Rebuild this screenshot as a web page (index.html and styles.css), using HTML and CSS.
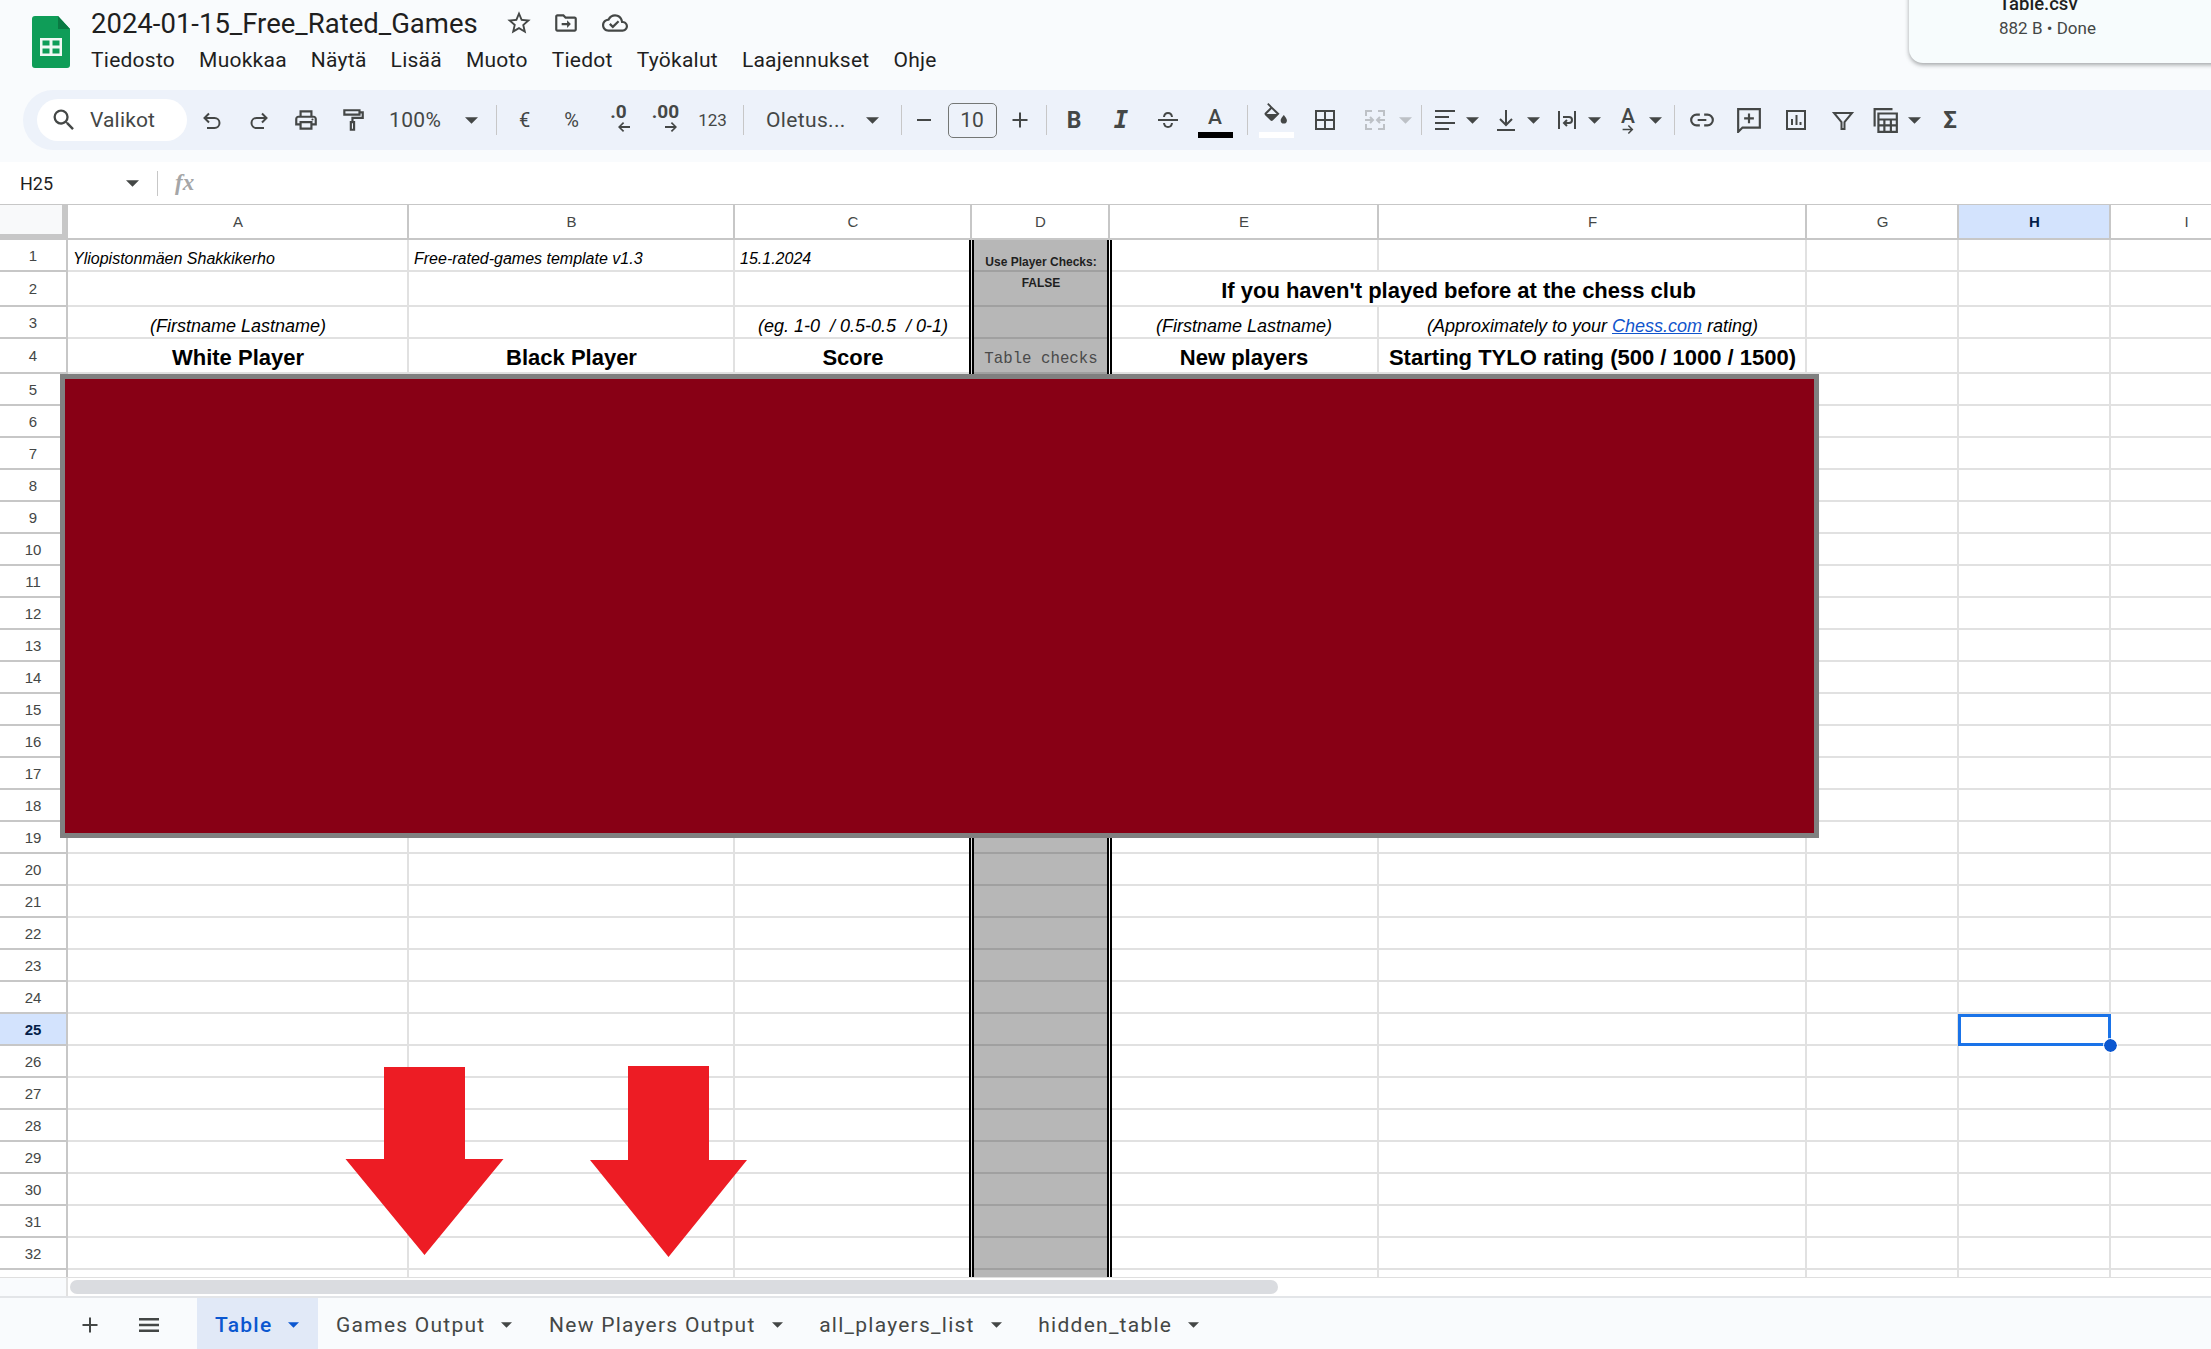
FILE: index.html
```html
<!DOCTYPE html>
<html lang="fi">
<head>
<meta charset="utf-8">
<title>2024-01-15_Free_Rated_Games</title>
<link rel="stylesheet" href="styles.css">
</head>
<body>
<svg class="sprite" xmlns="http://www.w3.org/2000/svg">
  <symbol id="i-search" viewBox="0 0 24 24"><path d="M15.5 14h-.79l-.28-.27A6.471 6.471 0 0 0 16 9.5 6.5 6.5 0 1 0 9.5 16c1.61 0 3.09-.59 4.23-1.57l.27.28v.79l5 4.99L20.49 19l-4.99-5zm-6 0C7.01 14 5 11.99 5 9.5S7.01 5 9.5 5 14 7.01 14 9.5 11.99 14 9.5 14z"/></symbol>
  <symbol id="i-undo" viewBox="0 0 24 24"><path class="ln" d="M9 14.5 4.5 10 9 5.5M5 10h9.5a5 5 0 0 1 0 10H7"/></symbol>
  <symbol id="i-redo" viewBox="0 0 24 24"><path class="ln" d="M15 14.5 19.5 10 15 5.5M19 10H9.5a5 5 0 0 0 0 10H17"/></symbol>
  <symbol id="i-print" viewBox="0 0 24 24"><path d="M19 8h-1V3H6v5H5c-1.66 0-3 1.34-3 3v6h4v4h12v-4h4v-6c0-1.66-1.34-3-3-3zM8 5h8v3H8V5zm8 14H8v-4h8v4zm2-4v-2H6v2H4v-4c0-.55.45-1 1-1h14c.55 0 1 .45 1 1v4h-2z"/><circle cx="18" cy="11.5" r="1"/></symbol>
  <symbol id="i-roller" viewBox="0 0 24 24"><path class="ln" d="M4 3h14v4H4zM18 5h3v5H11.5v4M10 14h3v7h-3z"/></symbol>
  <symbol id="i-caret" viewBox="0 0 12 6"><path d="M0 0h12L6 6z"/></symbol>
  <symbol id="i-arrow-l" viewBox="0 0 14 10"><path d="M6 0 1 5l5 5 1.2-1.2L4.2 5.9H13V4.1H4.2l3-2.9z"/></symbol>
  <symbol id="i-arrow-r" viewBox="0 0 14 10"><path d="m8 0 5 5-5 5-1.2-1.2 3-2.9H1V4.1h8.8l-3-2.9z"/></symbol>
  <symbol id="i-minus" viewBox="0 0 24 24"><path d="M5 11h14v2H5z"/></symbol>
  <symbol id="i-plus" viewBox="0 0 24 24"><path d="M11 4.5h2V11h6.5v2H13v6.5h-2V13H4.500v-2H11z"/></symbol>
  <symbol id="i-strike" viewBox="0 0 24 24"><path class="ln" d="M2 12h20M8 9c.3-2.600 2-4 4-4s3.700 1.400 4 4M8 15c.3 2.600 2 4 4 4s3.700-1.400 4-4"/></symbol>
  <symbol id="i-fill" viewBox="0 0 24 24"><path d="M4.200 2 3 3.200 6 6.200.9 11.300c-.6.600-.6 1.500 0 2.100l5.400 5.400c.6.600 1.500.6 2.100 0l6.500-6.500zM7.400 7.600l4.800 4.800H2.600z"/><path d="M2.600 12.400h9.600l-4.800 5.200zM19 13.500s-3 3.300-3 5.200a3 3 0 0 0 6 0c0-1.900-3-5.200-3-5.200z"/></symbol>
  <symbol id="i-borders" viewBox="0 0 24 24"><path class="ln" d="M3 3h18v18H3zM12 3v18M3 12h18"/></symbol>
  <symbol id="i-merge" viewBox="0 0 24 24"><path class="ln" d="M9 3H3v5M3 16v5h6M15 3h6v5M21 16v5h-6M2 12h7M7 9l3 3-3 3M22 12h-7M17 9l-3 3 3 3"/></symbol>
  <symbol id="i-align" viewBox="0 0 24 24"><path class="ln" d="M2 3h20M2 9h14M2 15h20M2 21h14"/></symbol>
  <symbol id="i-valign" viewBox="0 0 24 24"><path class="ln" d="M12 2v14M6 11l6 6 6-6M3 22h18"/></symbol>
  <symbol id="i-wrap" viewBox="0 0 24 24"><path class="ln" d="M4 3v18M20 3v18M8 9h6a3 3 0 0 1 0 6H9M12 12l-3 3 3 3"/></symbol>
  <symbol id="i-link" viewBox="0 0 24 24"><path class="ln" d="M10 7H7a5 5 0 0 0 0 10h3M14 7h3a5 5 0 0 1 0 10h-3M8 12h8"/></symbol>
  <symbol id="i-comment" viewBox="0 0 24 24"><path class="ln" d="M2 2h20v17H6l-4 4zM12 6v9M7.500 10.500h9"/></symbol>
  <symbol id="i-chart" viewBox="0 0 24 24"><path class="ln" d="M3 3h18v18H3zM8 11v6M12.500 7v10M16.500 14v3"/></symbol>
  <symbol id="i-filter" viewBox="0 0 24 24"><path class="ln" d="M3 5h18l-7.500 9v7h-3v-7z"/></symbol>
  <symbol id="i-table" viewBox="0 0 24 24"><path class="ln" d="M1.500 18V2H18M5 6h17v17H5zM5 11.500h17M5 17h17M10.500 11.500V23M16.500 11.500V23"/></symbol>
  <symbol id="i-star" viewBox="0 0 24 24"><path d="M22 9.240l-7.190-.62L12 2 9.190 8.630 2 9.240l5.460 4.730L5.820 21 12 17.270 18.180 21l-1.630-7.030L22 9.240zM12 15.400l-3.760 2.270 1-4.280-3.320-2.880 4.380-.38L12 6.100l1.710 4.040 4.380.38-3.320 2.880 1 4.280L12 15.400z"/></symbol>
  <symbol id="i-move" viewBox="0 0 24 24"><path d="M20 6h-8l-2-2H4c-1.100 0-2 .9-2 2v12c0 1.100.9 2 2 2h16c1.100 0 2-.9 2-2V8c0-1.100-.9-2-2-2zm0 12H4V6h5.200l2 2H20v10z"/><path d="m13 9.500 3.500 3.500-3.500 3.500V14H8v-2h5z"/></symbol>
  <symbol id="i-cloud" viewBox="0 0 24 24"><path d="M19.350 10.040C18.670 6.590 15.640 4 12 4 9.110 4 6.600 5.640 5.350 8.040 2.340 8.360 0 10.910 0 14c0 3.310 2.690 6 6 6h13c2.760 0 5-2.240 5-5 0-2.640-2.050-4.780-4.650-4.960zM19 18H6c-2.210 0-4-1.790-4-4 0-2.050 1.530-3.760 3.560-3.970l1.070-.11.5-.95C8.080 7.140 9.940 6 12 6c2.620 0 4.880 1.860 5.390 4.430l.3 1.500 1.530.11c1.560.1 2.780 1.410 2.780 2.960 0 1.650-1.350 3-3 3zm-9-3.820-2.090-2.090L6.500 13.500 10 17l6.010-6.010-1.410-1.410z"/></symbol>
  <symbol id="i-menu" viewBox="0 0 24 24"><path d="M2 5h20v2.500H2zM2 10.800h20v2.500H2zM2 16.500h20V19H2z"/></symbol>
</svg>

<header class="topbar">
  <svg class="logo" viewBox="0 0 38 52" aria-label="Sheets"><path fill="#0f9d58" d="M3 0h23l12 13v36a3 3 0 0 1-3 3H3a3 3 0 0 1-3-3V3a3 3 0 0 1 3-3z"/><path fill="#0a7a43" d="M26 0l12 13H26z"/><path fill="#f1f8f4" d="M8 22h22v18H8zm2.500 2.500v5h7v-5zm10 0v5h7v-5zm-10 8v5h7v-5zm10 0v5h7v-5z" fill-rule="evenodd"/></svg>
  <div class="titles">
    <div class="title-row">
      <span class="doc-title">2024-01-15_Free_Rated_Games</span>
      <svg class="ti star"><use href="#i-star"/></svg>
      <svg class="ti"><use href="#i-move"/></svg>
      <svg class="ti"><use href="#i-cloud"/></svg>
    </div>
    <nav class="menu">
      <span>Tiedosto</span><span>Muokkaa</span><span>Näytä</span><span>Lisää</span><span>Muoto</span><span>Tiedot</span><span>Työkalut</span><span>Laajennukset</span><span>Ohje</span>
    </nav>
  </div>
  <div class="download">
    <div class="dl-name">Table.csv</div>
    <div class="dl-status">882 B • Done</div>
  </div>
</header>

<div class="toolbar-wrap">
  <div class="toolbar">
    <div class="search"><svg class="search-ic"><use href="#i-search"/></svg><span>Valikot</span></div>
    <button class="btn first"><svg class="ic"><use href="#i-undo"/></svg></button>
    <button class="btn"><svg class="ic"><use href="#i-redo"/></svg></button>
    <button class="btn"><svg class="ic lg"><use href="#i-print"/></svg></button>
    <button class="btn"><svg class="ic lg"><use href="#i-roller"/></svg></button>
    <div class="select zoom-sel"><span>100%</span><svg class="caret"><use href="#i-caret"/></svg></div>
    <i class="sep s-zoom"></i>
    <button class="btn txt">€</button>
    <button class="btn txt">%</button>
    <button class="btn dec"><span>.0</span><svg class="dec-ar"><use href="#i-arrow-l"/></svg></button>
    <button class="btn dec"><span>.00</span><svg class="dec-ar right"><use href="#i-arrow-r"/></svg></button>
    <button class="btn txt small">123</button>
    <i class="sep s-num"></i>
    <div class="select font-sel"><span>Oletus...</span><svg class="caret"><use href="#i-caret"/></svg></div>
    <i class="sep s-font"></i>
    <button class="btn"><svg class="ic"><use href="#i-minus"/></svg></button>
    <div class="size">10</div>
    <button class="btn"><svg class="ic"><use href="#i-plus"/></svg></button>
    <i class="sep s-size"></i>
    <button class="btn bold">B</button>
    <button class="btn ital">I</button>
    <button class="btn"><svg class="ic"><use href="#i-strike"/></svg></button>
    <button class="btn colour"><span>A</span><i class="bar black"></i></button>
    <i class="sep s-text"></i>
    <button class="btn colour"><svg class="fill"><use href="#i-fill"/></svg><i class="bar white"></i></button>
    <button class="btn b-borders"><svg class="ic"><use href="#i-borders"/></svg></button>
    <button class="btn b-merge off"><svg class="ic"><use href="#i-merge"/></svg></button>
    <svg class="caret off"><use href="#i-caret"/></svg>
    <i class="sep s-merge"></i>
    <button class="btn nar"><svg class="ic"><use href="#i-align"/></svg></button>
    <svg class="caret tail"><use href="#i-caret"/></svg>
    <button class="btn nar gapped"><svg class="ic"><use href="#i-valign"/></svg></button>
    <svg class="caret tail"><use href="#i-caret"/></svg>
    <button class="btn nar gapped"><svg class="ic"><use href="#i-wrap"/></svg></button>
    <svg class="caret tail"><use href="#i-caret"/></svg>
    <button class="btn nar gapped rotate"><span>A</span><svg class="rot-ar"><use href="#i-arrow-r"/></svg></button>
    <svg class="caret tail"><use href="#i-caret"/></svg>
    <i class="sep s-rotate"></i>
    <button class="btn"><svg class="ic lg"><use href="#i-link"/></svg></button>
    <button class="btn"><svg class="ic lg"><use href="#i-comment"/></svg></button>
    <button class="btn"><svg class="ic"><use href="#i-chart"/></svg></button>
    <button class="btn"><svg class="ic"><use href="#i-filter"/></svg></button>
    <button class="btn nar b-func"><svg class="ic lg"><use href="#i-table"/></svg></button>
    <svg class="caret tail t-func"><use href="#i-caret"/></svg>
    <button class="btn sigma">Σ</button>
  </div>
</div>

<div class="formula">
  <div class="namebox"><span>H25</span><svg class="caret"><use href="#i-caret"/></svg></div>
  <i class="fsep"></i>
  <span class="fx">fx</span>
</div>

<main class="sheet">
  <div class="corner"></div><div class="ch">A</div><div class="ch">B</div><div class="ch">C</div><div class="ch">D</div><div class="ch">E</div><div class="ch">F</div><div class="ch">G</div><div class="ch sel">H</div><div class="ch">I</div>

  <div class="rh">1</div><div class="c note">Yliopistonmäen Shakkikerho</div><div class="c note">Free-rated-games template v1.3</div><div class="c note">15.1.2024</div><div class="c d tiny btm">Use Player Checks:</div><div class="c"></div><div class="c"></div><div class="c"></div><div class="c"></div><div class="c"></div>
  <div class="rh">2</div><div class="c"></div><div class="c"></div><div class="c"></div><div class="c d tiny top">FALSE</div><div class="c head wide">If you haven't played before at the chess club</div><div class="c"></div><div class="c"></div><div class="c"></div>
  <div class="rh">3</div><div class="c hint">(Firstname Lastname)</div><div class="c"></div><div class="c hint">(eg. 1-0  / 0.5-0.5  / 0-1)</div><div class="c d"></div><div class="c hint">(Firstname Lastname)</div><div class="c hint">(Approximately to your&nbsp;<a href="#">Chess.com</a>&nbsp;rating)</div><div class="c"></div><div class="c"></div><div class="c"></div>
  <div class="rh">4</div><div class="c head">White Player</div><div class="c head">Black Player</div><div class="c head">Score</div><div class="c d mono">Table checks</div><div class="c head">New players</div><div class="c head">Starting TYLO rating (500 / 1000 / 1500)</div><div class="c"></div><div class="c"></div><div class="c"></div>
  <div class="rh">5</div><div class="c"></div><div class="c"></div><div class="c"></div><div class="c d"></div><div class="c"></div><div class="c"></div><div class="c"></div><div class="c"></div><div class="c"></div>
  <div class="rh">6</div><div class="c"></div><div class="c"></div><div class="c"></div><div class="c d"></div><div class="c"></div><div class="c"></div><div class="c"></div><div class="c"></div><div class="c"></div>
  <div class="rh">7</div><div class="c"></div><div class="c"></div><div class="c"></div><div class="c d"></div><div class="c"></div><div class="c"></div><div class="c"></div><div class="c"></div><div class="c"></div>
  <div class="rh">8</div><div class="c"></div><div class="c"></div><div class="c"></div><div class="c d"></div><div class="c"></div><div class="c"></div><div class="c"></div><div class="c"></div><div class="c"></div>
  <div class="rh">9</div><div class="c"></div><div class="c"></div><div class="c"></div><div class="c d"></div><div class="c"></div><div class="c"></div><div class="c"></div><div class="c"></div><div class="c"></div>
  <div class="rh">10</div><div class="c"></div><div class="c"></div><div class="c"></div><div class="c d"></div><div class="c"></div><div class="c"></div><div class="c"></div><div class="c"></div><div class="c"></div>
  <div class="rh">11</div><div class="c"></div><div class="c"></div><div class="c"></div><div class="c d"></div><div class="c"></div><div class="c"></div><div class="c"></div><div class="c"></div><div class="c"></div>
  <div class="rh">12</div><div class="c"></div><div class="c"></div><div class="c"></div><div class="c d"></div><div class="c"></div><div class="c"></div><div class="c"></div><div class="c"></div><div class="c"></div>
  <div class="rh">13</div><div class="c"></div><div class="c"></div><div class="c"></div><div class="c d"></div><div class="c"></div><div class="c"></div><div class="c"></div><div class="c"></div><div class="c"></div>
  <div class="rh">14</div><div class="c"></div><div class="c"></div><div class="c"></div><div class="c d"></div><div class="c"></div><div class="c"></div><div class="c"></div><div class="c"></div><div class="c"></div>
  <div class="rh">15</div><div class="c"></div><div class="c"></div><div class="c"></div><div class="c d"></div><div class="c"></div><div class="c"></div><div class="c"></div><div class="c"></div><div class="c"></div>
  <div class="rh">16</div><div class="c"></div><div class="c"></div><div class="c"></div><div class="c d"></div><div class="c"></div><div class="c"></div><div class="c"></div><div class="c"></div><div class="c"></div>
  <div class="rh">17</div><div class="c"></div><div class="c"></div><div class="c"></div><div class="c d"></div><div class="c"></div><div class="c"></div><div class="c"></div><div class="c"></div><div class="c"></div>
  <div class="rh">18</div><div class="c"></div><div class="c"></div><div class="c"></div><div class="c d"></div><div class="c"></div><div class="c"></div><div class="c"></div><div class="c"></div><div class="c"></div>
  <div class="rh">19</div><div class="c"></div><div class="c"></div><div class="c"></div><div class="c d"></div><div class="c"></div><div class="c"></div><div class="c"></div><div class="c"></div><div class="c"></div>
  <div class="rh">20</div><div class="c"></div><div class="c"></div><div class="c"></div><div class="c d"></div><div class="c"></div><div class="c"></div><div class="c"></div><div class="c"></div><div class="c"></div>
  <div class="rh">21</div><div class="c"></div><div class="c"></div><div class="c"></div><div class="c d"></div><div class="c"></div><div class="c"></div><div class="c"></div><div class="c"></div><div class="c"></div>
  <div class="rh">22</div><div class="c"></div><div class="c"></div><div class="c"></div><div class="c d"></div><div class="c"></div><div class="c"></div><div class="c"></div><div class="c"></div><div class="c"></div>
  <div class="rh">23</div><div class="c"></div><div class="c"></div><div class="c"></div><div class="c d"></div><div class="c"></div><div class="c"></div><div class="c"></div><div class="c"></div><div class="c"></div>
  <div class="rh">24</div><div class="c"></div><div class="c"></div><div class="c"></div><div class="c d"></div><div class="c"></div><div class="c"></div><div class="c"></div><div class="c"></div><div class="c"></div>
  <div class="rh sel">25</div><div class="c"></div><div class="c"></div><div class="c"></div><div class="c d"></div><div class="c"></div><div class="c"></div><div class="c"></div><div class="c active"><i class="handle"></i></div><div class="c"></div>
  <div class="rh">26</div><div class="c"></div><div class="c"></div><div class="c"></div><div class="c d"></div><div class="c"></div><div class="c"></div><div class="c"></div><div class="c"></div><div class="c"></div>
  <div class="rh">27</div><div class="c"></div><div class="c"></div><div class="c"></div><div class="c d"></div><div class="c"></div><div class="c"></div><div class="c"></div><div class="c"></div><div class="c"></div>
  <div class="rh">28</div><div class="c"></div><div class="c"></div><div class="c"></div><div class="c d"></div><div class="c"></div><div class="c"></div><div class="c"></div><div class="c"></div><div class="c"></div>
  <div class="rh">29</div><div class="c"></div><div class="c"></div><div class="c"></div><div class="c d"></div><div class="c"></div><div class="c"></div><div class="c"></div><div class="c"></div><div class="c"></div>
  <div class="rh">30</div><div class="c"></div><div class="c"></div><div class="c"></div><div class="c d"></div><div class="c"></div><div class="c"></div><div class="c"></div><div class="c"></div><div class="c"></div>
  <div class="rh">31</div><div class="c"></div><div class="c"></div><div class="c"></div><div class="c d"></div><div class="c"></div><div class="c"></div><div class="c"></div><div class="c"></div><div class="c"></div>
  <div class="rh">32</div><div class="c"></div><div class="c"></div><div class="c"></div><div class="c d"></div><div class="c"></div><div class="c"></div><div class="c"></div><div class="c"></div><div class="c"></div>
  <div class="rh"></div><div class="c"></div><div class="c"></div><div class="c"></div><div class="c d"></div><div class="c"></div><div class="c"></div><div class="c"></div><div class="c"></div><div class="c"></div>

  <div class="redact"></div>
  <svg class="arrow a1" viewBox="0 0 158 188"><path d="M38.500 0h81v92H158L79 188 0 92h38.500z"/></svg>
  <svg class="arrow a2" viewBox="0 0 157 191"><path d="M38 0h81v94h38L78.500 191 0 94h38z"/></svg>
</main>

<div class="hscroll"><div class="hscroll-gutter"></div><div class="thumb"></div></div>

<footer class="tabs">
  <svg class="tab-ic"><use href="#i-plus"/></svg>
  <svg class="tab-ic menu-ic"><use href="#i-menu"/></svg>
  <div class="tablist">
    <div class="tab on"><span>Table</span><svg class="caret"><use href="#i-caret"/></svg></div>
    <div class="tab"><span>Games Output</span><svg class="caret"><use href="#i-caret"/></svg></div>
    <div class="tab"><span>New Players Output</span><svg class="caret"><use href="#i-caret"/></svg></div>
    <div class="tab"><span>all_players_list</span><svg class="caret"><use href="#i-caret"/></svg></div>
    <div class="tab"><span>hidden_table</span><svg class="caret"><use href="#i-caret"/></svg></div>
  </div>
</footer>
</body>
</html>
```

FILE: styles.css
```css
* { box-sizing: border-box; }
html, body { margin: 0; height: 1349px; overflow: hidden; background: #fff; }
body { font-family: Roboto, "Open Sans", sans-serif; color: #444746; display: flex; flex-direction: column; width: 2211px; }
.sprite { display: none; }
svg { fill: currentColor; color: #444746; display: block; }
.ln { fill: none; stroke: currentColor; stroke-width: 2; }

.topbar { position: relative; height: 90px; background: #f9fbfd; display: flex; padding: 16px 0 0 32px; overflow: hidden; flex: none; }
.logo { width: 38px; height: 52px; flex: none; }
.titles { margin-left: 21px; margin-top: -9px; }
.title-row { display: flex; align-items: center; height: 32px; }
.doc-title { font-size: 27.5px; color: #1f1f1f; width: 413.5px; white-space: nowrap; }
.ti { width: 26px; height: 26px; margin-right: 23px; }
.star { width: 28px; height: 28px; margin-right: 20.5px; }
.menu { display: flex; gap: 24px; font-size: 21px; letter-spacing: .25px; color: #1f1f1f; margin-top: 8px; line-height: 26px; }
.download { position: absolute; left: 1909px; top: -30px; width: 320px; height: 93px; background: #f7fcfd; border-radius: 0 0 0 14px; box-shadow: 0 2px 4px rgba(60,64,67,.45); padding: 24px 0 0 90px; }
.dl-name { font-size: 18.5px; font-weight: 500; color: #1f1f1f; line-height: 20px; }
.dl-status { font-size: 17px; color: #444746; line-height: 20px; margin-top: 4px; }

.toolbar-wrap { height: 72px; background: #f9fbfd; padding-left: 23px; flex: none; }
.toolbar { height: 60px; background: #edf2fa; border-radius: 30px 0 0 30px; display: flex; align-items: center; padding-left: 14px; }
.search { width: 150px; height: 42px; background: #fff; border-radius: 21px; display: flex; align-items: center; font-size: 21px; letter-spacing: .15px; color: #444746; padding-left: 14px; flex: none; }
.search-ic { width: 28px; height: 28px; margin-right: 12px; margin-left: -1px; }
.btn { width: 47px; height: 42px; border: 0; background: none; padding: 0; display: flex; align-items: center; justify-content: center; flex: none; font-family: inherit; color: #444746; position: relative; }
.btn.first { margin-left: 1px; }
.ic { width: 24px; height: 24px; }
.ic.lg { width: 26px; height: 26px; }
.select { display: flex; align-items: center; justify-content: space-between; flex: none; font-size: 21px; letter-spacing: .35px; color: #444746; }
.zoom-sel { width: 89px; margin-left: 13px; }
.font-sel { width: 112.5px; margin-left: 18px; }
.font-sel span { white-space: nowrap; }
.caret { width: 13px; height: 7px; flex: none; }
.sep { width: 1px; height: 30px; background: #c7c7c7; flex: none; margin: 0 4px 0 8px; }
.s-zoom { margin-left: 18px; }
.s-num { margin-left: 7px; }
.s-font { margin: 0 -1px 0 22px; }
.s-size { margin-left: 2px; }
.s-text { margin: 0 5px 0 8px; }
.s-merge { margin-left: 9px; margin-right: 6px; }
.s-rotate { margin-left: 12px; }
.txt { font-size: 20px; }
.txt.small { font-size: 17px; }
.dec { flex-direction: column; font-size: 19px; font-weight: 700; line-height: 16px; }
.dec span { margin-top: -4px; }
.dec-ar { width: 14px; height: 10px; margin-left: 10px; margin-top: 2px; }
.size { width: 49px; height: 35px; border: 1px solid #747775; border-radius: 5px; font-size: 21px; display: flex; align-items: center; justify-content: center; flex: none; }
.bold { font-size: 23px; font-weight: 700; }
.ital { font-size: 24px; font-weight: 700; font-style: italic; font-family: "DejaVu Sans Mono", monospace; }
.colour { flex-direction: column; font-size: 21px; line-height: 22px; font-weight: 500; }
.colour span { margin-top: -6px; }
.bar { position: absolute; left: 6px; top: 33px; width: 35px; height: 6px; }
.bar.black { background: #000; }
.bar.white { background: #fff; }
.fill { width: 25px; height: 25px; margin-top: -14px; }
.b-borders { margin-left: 2px; }
.b-merge { margin-left: 3px; }
.off, .off svg { color: #bdc1c6; }
.tail { margin-left: 3px; }
.nar { width: 35px; }
.nar .ic { width: 24px; height: 24px; }
.gapped { margin-left: 10px; }
.rotate { flex-direction: column; font-size: 21px; line-height: 19px; font-weight: 500; }
.rot-ar { width: 20px; height: 9px; margin-top: -1px; }
.b-func { margin-left: 2px; }
.b-func .ic.lg { width: 26px; height: 26px; }
.t-func { margin-left: 4px; }
.sigma { font-size: 24px; font-weight: 700; margin-left: 6px; }

.formula { height: 42px; background: #fff; display: flex; align-items: center; flex: none; position: relative; }
.namebox { width: 140px; padding-left: 20px; display: flex; align-items: center; justify-content: space-between; padding-right: 1px; font-size: 18px; color: #1f1f1f; }
.fsep { width: 1px; height: 25px; background: #c7c7c7; margin-left: 17px; }
.fx { font-family: "Liberation Serif", serif; font-style: italic; font-weight: 700; font-size: 23px; color: #a5a6a7; margin-left: 17px; }

.sheet { position: relative; height: 1074px; flex: none; overflow: hidden; display: grid; font-family: "Liberation Sans", Arial, sans-serif; grid-template-columns: 68px 341px 326px 237px 138px 269px 428px 152px 152px 152px; grid-template-rows: 35px 32px 35px 32px 35px; grid-auto-rows: 32px; border-top: 1px solid #c7c7c7; border-bottom: 1px solid #dfdfdf; }
.corner { background: #f8f9fa; border-right: 6px solid #c7c7c7; border-bottom: 6px solid #c7c7c7; }
.ch { font-size: 15px; color: #444746; display: flex; align-items: center; justify-content: center; background: #fff; border-right: 2px solid #c7c7c7; border-bottom: 2px solid #c7c7c7; padding-left: 1px; }
.ch.sel { background: #d3e3fd; color: #041e49; font-weight: 700; }
.rh { font-size: 15px; color: #444746; display: flex; align-items: center; justify-content: center; border-right: 2px solid #c7c7c7; border-bottom: 2px solid #c7c7c7; background: #fff; }
.rh.sel { background: #d3e3fd; color: #041e49; font-weight: 700; }
.c { border-right: 2px solid #e1e1e1; border-bottom: 2px solid #e1e1e1; display: flex; align-items: flex-end; justify-content: center; color: #000; white-space: pre; position: relative; min-width: 0; padding-left: 1px; }
.note { font-size: 16px; font-style: italic; line-height: 20px; justify-content: flex-start; padding: 0 0 1px 5px; }
.hint { font-size: 18px; font-style: italic; line-height: 22px; }
.hint a { color: #1155cc; text-decoration: underline; }
.head { font-size: 22px; font-weight: 700; line-height: 26px; padding-bottom: 1px; }
.wide { grid-column: span 2; padding-bottom: 1px; padding-left: 2px; }
.d { background: #b7b7b7; background-clip: padding-box; border-left: 5px double #000; border-right: 5px double #000; border-bottom: 0; box-shadow: inset 0 -2px #a0a0a0; margin: 0 -2px 0 -3px; z-index: 1; }
.tiny { font-size: 12px; font-weight: 700; color: #1f1f1f; line-height: 14px; }
.tiny.btm { padding-bottom: 3px; }
.tiny.top { align-items: flex-start; padding-top: 4px; }
.mono { font-family: "Liberation Mono", monospace; font-size: 15.75px; color: #4a4a4a; line-height: 20px; padding-bottom: 5px; }
.active { outline: 3px solid #1a73e8; outline-offset: -3px; border: 0; z-index: 2; margin-left: -1px; }
.handle { position: absolute; right: -6px; bottom: -6px; width: 13px; height: 13px; border-radius: 50%; background: #0b57d0; outline: 1px solid #fff; }
.redact { position: absolute; left: 60px; top: 169px; width: 1759px; height: 464px; background: #880015; border: 5px solid #808080; z-index: 3; }
.arrow { position: absolute; fill: #ed1c24; z-index: 3; }
.a1 { left: 345px; top: 862px; width: 159px; height: 188px; }
.a2 { left: 590px; top: 861px; width: 157px; height: 191px; }

.hscroll { height: 18px; background: #fff; display: flex; align-items: center; flex: none; }
.hscroll-gutter { width: 68px; height: 18px; background: #f9fbfd; border-right: 2px solid #e1e1e1; }
.thumb { width: 1208px; height: 14px; background: #dadce0; border-radius: 7px; margin-left: 2px; }

.tabs { flex: 1; background: #f9fbfd; border-top: 2px solid #e3e5e8; display: flex; align-items: stretch; padding-left: 78px; }
.tab-ic { width: 24px; height: 24px; align-self: center; margin-top: 3px; }
.menu-ic { margin-left: 35px; }
.tablist { display: flex; margin-left: 36px; }
.tab { display: flex; align-items: center; padding: 3px 18.6px 0 18px; font-size: 21px; letter-spacing: 1.25px; gap: 16px; color: #444746; }
.tab .caret { width: 11px; height: 6px; }
.tab.on { background: #e1e9f7; color: #0b57d0; font-weight: 500; }
.tab.on svg { color: #0b57d0; }
```
